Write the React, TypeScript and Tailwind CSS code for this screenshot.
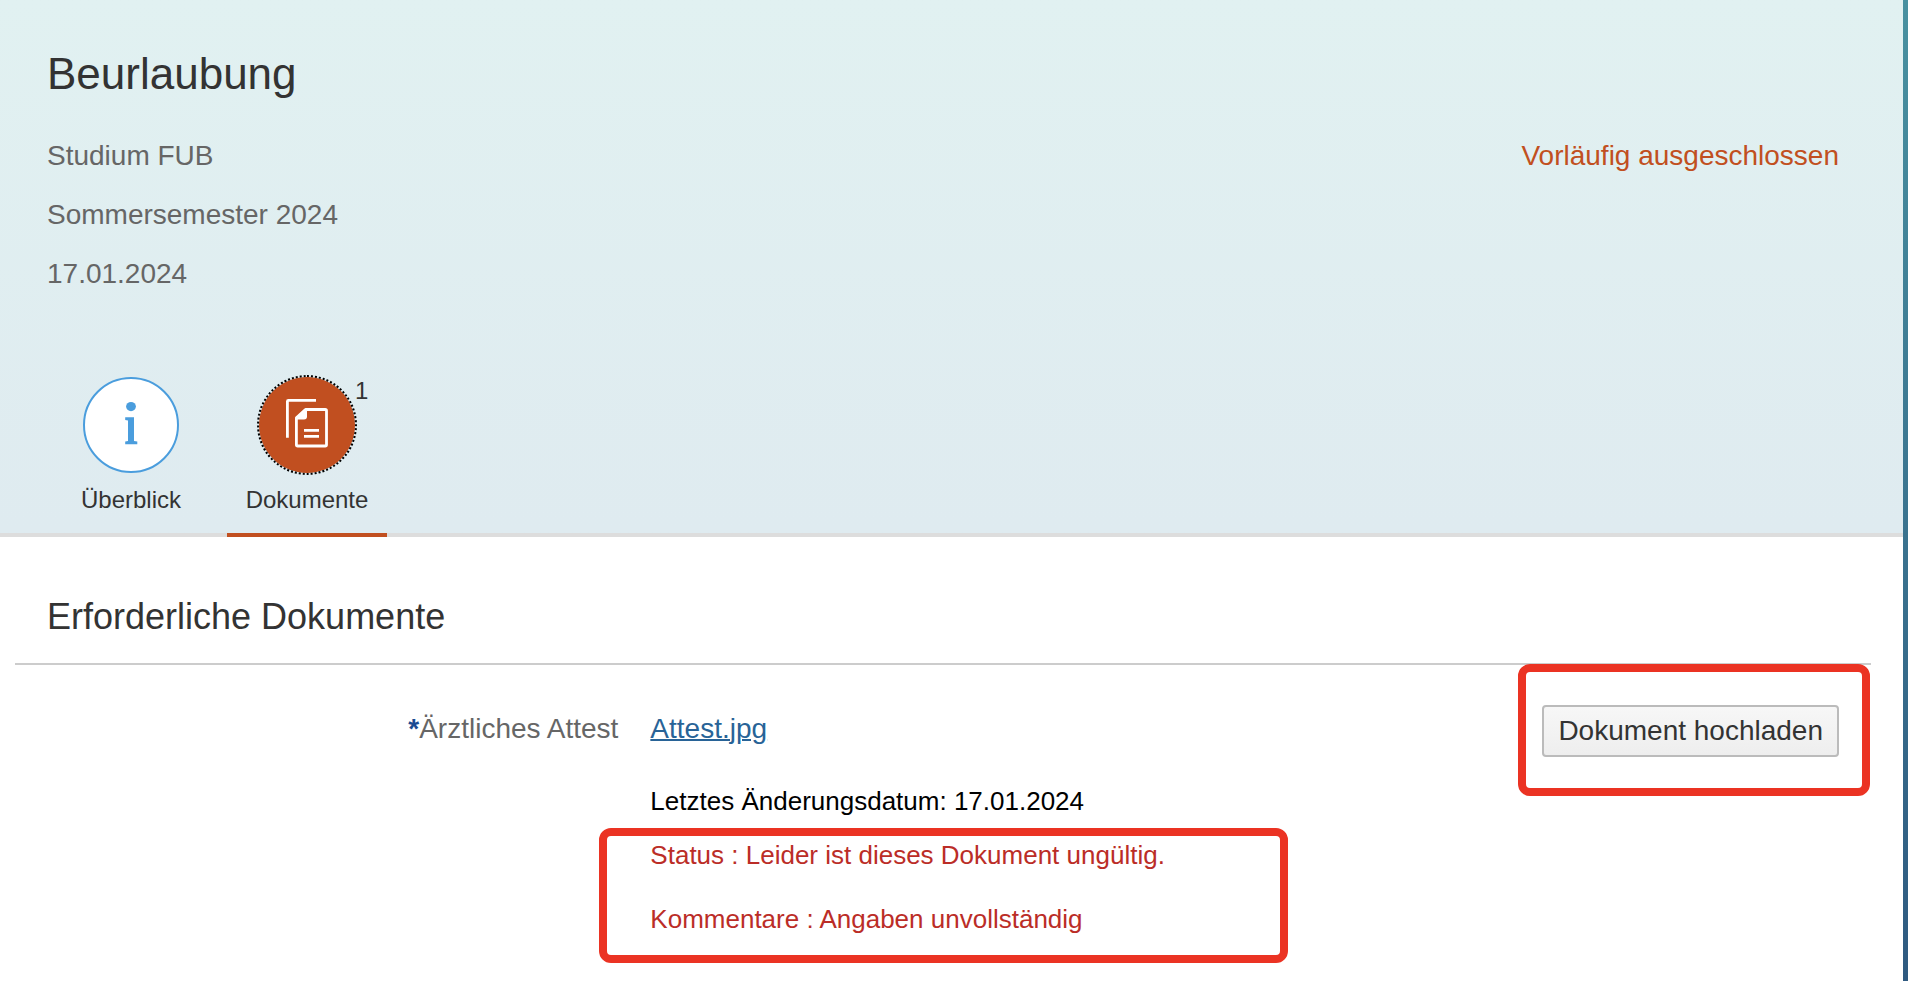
const details = ["Studium FUB", "Sommersemester 2024", "17.01.2024"];

function InfoIcon() {
  return (
    <svg className="h-12 w-4" viewBox="0 0 16 48" fill="currentColor" aria-hidden="true">
      <ellipse cx="8" cy="5.600" rx="4.900" ry="4.600" />
      <path d="M2.200 16.200H11V40L14.300 40.500V43.200H2.200V40.500L5 40V19.500L2.200 19Z" />
    </svg>
  );
}

function DocumentsIcon() {
  return (
    <svg className="h-[52px] w-11" viewBox="0 0 44 52" fill="none" stroke="currentColor" strokeWidth="2.800" aria-hidden="true">
      <path d="M2.400 38.700V2.400Q2.400 1.400 3.400 1.400H31" />
      <path d="M20.500 10.500H40.200Q41.500 10.500 41.500 11.800V45.700Q41.500 47 40.200 47H12.700Q11.400 47 11.400 45.700V18.800Z" strokeLinejoin="round" />
      <path d="M19.500 10H22V17.500Q22 20.400 19 20.400H11V18.500Z" fill="currentColor" stroke="none" />
      <path d="M19 31.300H34M19 37.300H34" />
    </svg>
  );
}

export default function App() {
  return (
    <div className="flex min-h-screen w-full bg-white font-['Liberation_Sans',Arial,sans-serif] text-[#333333]">
      <main className="min-w-0 flex-1">
        <header className="border-b-4 border-[#dddddd] bg-linear-to-b from-[#e1f1f1] to-[#dfebf0] pt-[42px]">
          <div className="pr-16 pl-[47px]">
            <h1 className="text-[44px] leading-[64px]">Beurlaubung</h1>
            <div className="mt-5 flex justify-between text-[28px] leading-[59px]">
              <div className="text-[#666666]">
                {details.map((line) => (
                  <p key={line}>{line}</p>
                ))}
              </div>
              <p className="text-[#c14f20]">Vorläufig ausgeschlossen</p>
            </div>
          </div>

          <nav className="mt-[74px] -mb-1 flex gap-4 px-[51px] text-2xl [text-shadow:0_1px_0_#ffffff]">
            <button type="button" className="flex w-40 flex-col items-center border-b-4 border-transparent pb-[17px]">
              <span className="flex size-24 items-center justify-center rounded-full border-2 border-[#4a9ddd] bg-white text-[#4a9ddd]">
                <InfoIcon />
              </span>
              <span className="mt-[11px] leading-8">Überblick</span>
            </button>
            <button type="button" className="flex w-40 flex-col items-center border-b-4 border-[#c14f20] pb-[17px]">
              <span className="relative flex size-24 items-center justify-center rounded-full bg-[#c14f20] text-white outline-2 outline-dotted outline-black">
                <DocumentsIcon />
                <span className="absolute -top-0.5 left-full leading-8 text-[#333333]">1</span>
              </span>
              <span className="mt-[11px] leading-8">Dokumente</span>
            </button>
          </nav>
        </header>

        <section className="pr-8 pl-[15px]">
          <h2 className="border-b-2 border-[#cccccc] px-8 pt-14 pb-[22px] text-[36px] leading-12">
            Erforderliche Dokumente
          </h2>
          <div className="grid grid-cols-[33%_1fr_auto] items-start gap-x-3 px-8 pt-10 text-[28px]">
            <p className="pt-1 pr-5 text-right leading-10 text-[#666666]">
              <span className="font-bold text-[#1a4b92]">*</span>Ärztliches Attest
            </p>
            <div className="pt-1 text-[26px] leading-10">
              <a href="#attest" className="block w-fit text-[28px] leading-10 text-[#286397] underline decoration-2">
                Attest.jpg
              </a>
              <p className="mt-8 text-black">Letztes Änderungsdatum: 17.01.2024</p>
              <div className="relative mt-[14px] w-fit text-[#bb2d27]">
                <p>Status : Leider ist dieses Dokument ungültig.</p>
                <p className="mt-6">Kommentare : Angaben unvollständig</p>
                <div className="pointer-events-none absolute -top-[7px] -right-[123px] -bottom-6 -left-[51px] rounded-xl border-8 border-[#eb3323]" />
              </div>
            </div>
            <div className="relative">
              <button
                type="button"
                className="block rounded-sm border-2 border-[#bbbbbb] bg-linear-to-b from-[#f7f7f7] to-[#eeeeee] px-[14px] leading-12"
              >
                Dokument hochladen
              </button>
              <div className="pointer-events-none absolute -top-[41px] -right-[31px] -bottom-[39px] -left-6 rounded-xl border-8 border-[#eb3323]" />
            </div>
          </div>
        </section>
      </main>

      {/* Page background showing past the content */}
      <div className="w-[5px] shrink-0 bg-linear-to-b from-[#4991a0] to-[#2f5a80]" />
    </div>
  );
}
